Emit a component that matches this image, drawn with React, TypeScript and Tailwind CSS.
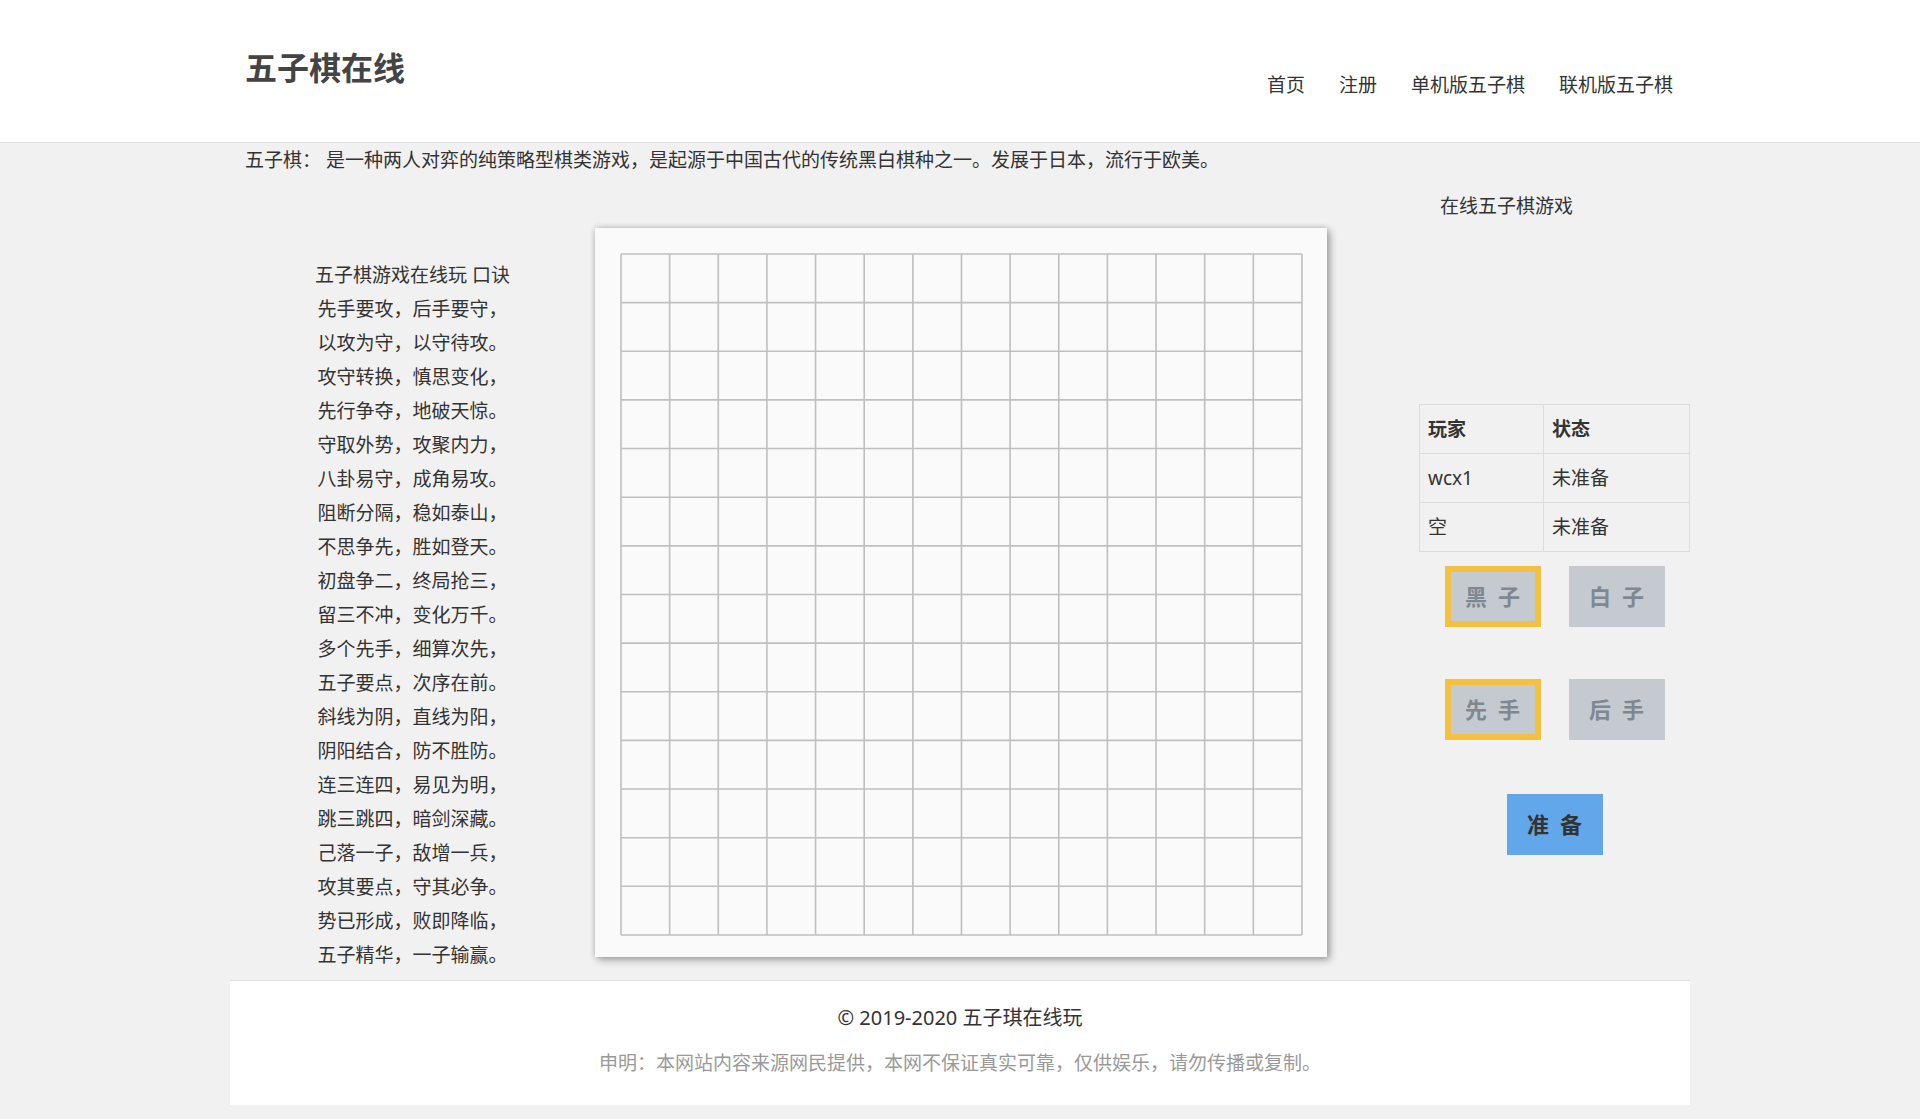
import React from 'react';

const poem = [
  '先手要攻，后手要守，',
  '以攻为守，以守待攻。',
  '攻守转换，慎思变化，',
  '先行争夺，地破天惊。',
  '守取外势，攻聚内力，',
  '八卦易守，成角易攻。',
  '阻断分隔，稳如泰山，',
  '不思争先，胜如登天。',
  '初盘争二，终局抢三，',
  '留三不冲，变化万千。',
  '多个先手，细算次先，',
  '五子要点，次序在前。',
  '斜线为阴，直线为阳，',
  '阴阳结合，防不胜防。',
  '连三连四，易见为明，',
  '跳三跳四，暗剑深藏。',
  '己落一子，敌增一兵，',
  '攻其要点，守其必争。',
  '势已形成，败即降临，',
  '五子精华，一子输赢。',
];

const navItems = ['首页', '注册', '单机版五子棋', '联机版五子棋'];

const players = [
  { name: 'wcx1', state: '未准备' },
  { name: '空', state: '未准备' },
];

const Board = () => {
  const size = 15;
  const cell = 48.64;
  const lines = Array.from({ length: size }, (_, i) => 1 + i * cell);
  const end = 1 + (size - 1) * cell;
  return (
    <svg width="684" height="684" className="block">
      {lines.map((p, i) => (
        <g key={i} stroke="#bfbfbf" strokeWidth="1.6">
          <line x1={p} y1={1} x2={p} y2={end} />
          <line x1={1} y1={p} x2={end} y2={p} />
        </g>
      ))}
    </svg>
  );
};

const PickButton = ({ label, active }: { label: string; active?: boolean }) => (
  <button
    className={`flex h-[61px] w-[96px] items-center justify-center bg-[#c5cad0] pl-[11px] text-[22px] font-bold tracking-[11px] text-[#7f8790] ${
      active ? 'border-[6px] border-[#f4c03f]' : ''
    }`}
  >
    {label}
  </button>
);

export default function App() {
  return (
    <div
      className="min-h-[1119px] bg-[#f2f1f1] text-[#333]"
      style={{ fontFamily: '"Noto Sans", "Noto Sans CJK SC", sans-serif' }}
    >
      <header className="h-[143px] border-b border-[#dddddd] bg-white">
        <div className="mx-auto flex w-[1460px] items-start justify-between">
          <h1 className="mt-[46px] pl-[15px] text-[32px] font-bold leading-[44px] text-[#444]">
            五子棋在线
          </h1>
          <nav className="mt-[69px] flex">
            {navItems.map((n) => (
              <a key={n} className="px-[17px] text-[19px] leading-[32px] text-[#333]">
                {n}
              </a>
            ))}
          </nav>
        </div>
      </header>

      <main className="mx-auto w-[1460px]">
        <p className="pl-[15px] pt-[5px] text-[19px] leading-[24px] text-[#333]">
          五子棋： 是一种两人对弈的纯策略型棋类游戏，是起源于中国古代的传统黑白棋种之一。发展于日本，流行于欧美。
        </p>

        <div className="flex h-[808px]">
          <div className="w-[365px] pt-[86px] text-center text-[19px] leading-[34px]">
            <div>五子棋游戏在线玩 口诀</div>
            {poem.map((l) => (
              <div key={l}>{l}</div>
            ))}
          </div>

          <div className="mt-[56px] h-[729px] w-[732px] bg-[#fafafa] pl-[25px] pt-[25px] shadow-[0_0_6px_rgba(0,0,0,0.18),3px_3px_8px_rgba(0,0,0,0.3)]">
            <Board />
          </div>

          <div className="flex w-[363px] flex-col pt-[17px]">
            <div className="pr-[4px] text-center text-[19px] leading-[34px]">在线五子棋游戏</div>
            <div className="ml-auto mt-[181px] w-[271px]">
              <table className="w-full border-collapse text-left text-[19px]">
                <thead>
                  <tr className="h-[49px]">
                    <th className="w-[124px] border border-[#dcdcdc] px-[8px] font-bold">玩家</th>
                    <th className="border border-[#dcdcdc] px-[8px] font-bold">状态</th>
                  </tr>
                </thead>
                <tbody>
                  {players.map((p) => (
                    <tr key={p.name} className="h-[49px]">
                      <td className="border border-[#dcdcdc] px-[8px]">{p.name}</td>
                      <td className="border border-[#dcdcdc] px-[8px]">{p.state}</td>
                    </tr>
                  ))}
                </tbody>
              </table>
              <div className="mt-[14px] flex justify-center gap-[28px]">
                <PickButton label="黑子" active />
                <PickButton label="白子" />
              </div>
              <div className="mt-[52px] flex justify-center gap-[28px]">
                <PickButton label="先手" active />
                <PickButton label="后手" />
              </div>
              <div className="mt-[54px] flex justify-center">
                <button className="flex h-[61px] w-[96px] items-center justify-center bg-[#62a7e9] pl-[11px] text-[22px] font-bold tracking-[11px] text-[#333]">
                  准备
                </button>
              </div>
            </div>
          </div>
        </div>

        <footer className="h-[125px] border-t border-[#e0e0e0] bg-white pt-[22px] text-center">
          <div className="text-[20px] leading-[30px] text-[#333]">© 2019-2020 五子琪在线玩</div>
          <div className="mt-[15px] text-[19px] leading-[30px] text-[#999]">
            申明：本网站内容来源网民提供，本网不保证真实可靠，仅供娱乐，请勿传播或复制。
          </div>
        </footer>
      </main>
    </div>
  );
}
